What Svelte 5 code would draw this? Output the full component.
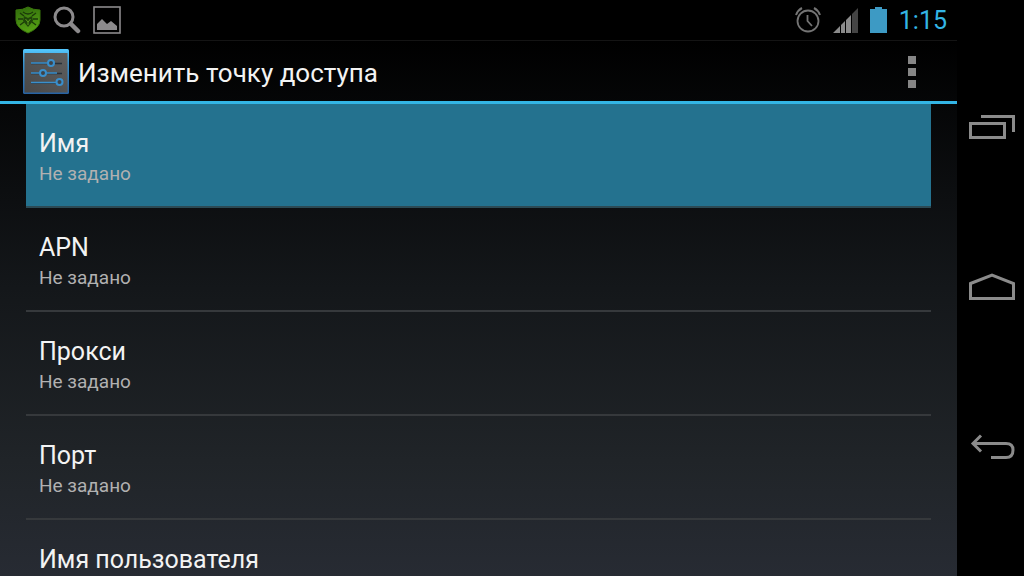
<script lang="ts">
	let selected = $state(0);

	const empty = 'Не задано';
	const items = [
		{ title: 'Имя', summary: empty },
		{ title: 'APN', summary: empty },
		{ title: 'Прокси', summary: empty },
		{ title: 'Порт', summary: empty },
		{ title: 'Имя пользователя', summary: empty }
	];
</script>

<div class="device">
	<div class="screen">
		<div class="status-bar">
			<div class="notifications">
				<svg width="26" height="28" viewBox="0 0 26 28">
					<defs>
						<linearGradient id="shield" x1="0" y1="0" x2="0.3" y2="1">
							<stop offset="0" stop-color="#2f6a0c" />
							<stop offset="1" stop-color="#559f14" />
						</linearGradient>
					</defs>
					<path
						d="M13 1 Q18 4 25 4 V14 Q25 22 13 27 Q1 22 1 14 V4 Q8 4 13 1Z"
						fill="url(#shield)"
						stroke="#3b780d"
						stroke-width="1"
					/>
					<g fill="none" stroke="#1b3a0a" stroke-width="1.3">
						<path d="M5 7 L9 10 M21 7 L17 10 M3 13 H8 M23 13 H18 M5 19 L9 16 M21 19 L17 16" />
						<path d="M8 6 Q13 10 18 6" />
					</g>
					<path d="M9 10 L13 12 L17 10 L18 15 L13 21 L8 15Z" fill="#1f450a" />
					<path d="M10.5 13 L13 16 L15.5 13 M13 16 V19" fill="none" stroke="#5c9c1c" />
				</svg>
				<svg width="28" height="28" viewBox="0 0 28 28" fill="none" stroke="#8c8a8c">
					<circle cx="11" cy="11" r="9" stroke-width="3" />
					<path d="M18 18 L25 25" stroke-width="4.5" stroke-linecap="round" />
				</svg>
				<svg width="28" height="28" viewBox="0 0 28 28">
					<rect x="1" y="1" width="26" height="26" fill="none" stroke="#8c8a8c" stroke-width="1.6" />
					<path d="M4 24 V18 L9 13 L14 18 L18 15 L24 20 V24Z" fill="#8c8a8c" />
				</svg>
			</div>
			<div class="system">
				<svg width="26" height="26" viewBox="0 0 26 26" fill="none" stroke="#747474" stroke-width="1.8">
					<circle cx="13" cy="14" r="10.5" />
					<path d="M12.5 8 V14 L17 19" />
					<path d="M1 8 Q3 3 7 1 M25 8 Q23 3 19 1" stroke-width="2" />
				</svg>
				<svg width="25" height="25" viewBox="0 0 25 25">
					<path d="M0 25 L7 18 V25Z M8 17 L12 13 V25 H8Z M13 12 L18 7 V25 H13Z" fill="#8a8a8a" />
					<path d="M19 6 L25 0 V25 H19Z" fill="#444" />
				</svg>
				<svg width="17" height="26" viewBox="0 0 17 26">
					<path d="M5 0 H12 V2 H17 V26 H0 V2 H5Z" fill="#3d9ac4" />
				</svg>
				<time>1:15</time>
			</div>
		</div>

		<header class="action-bar">
			<svg width="46" height="46" viewBox="0 0 46 46">
				<defs>
					<linearGradient id="edge" x1="0" y1="0" x2="0" y2="1">
						<stop offset="0" stop-color="#55c9ff" />
						<stop offset="0.3" stop-color="#3793cf" />
						<stop offset="1" stop-color="#2762a3" />
					</linearGradient>
					<linearGradient id="plate" x1="0" y1="1" x2="1" y2="0">
						<stop offset="0" stop-color="#484848" />
						<stop offset="1" stop-color="#5f5f5f" />
					</linearGradient>
				</defs>
				<rect width="46" height="45" rx="1.5" fill="url(#edge)" />
				<rect x="1.5" y="4" width="43" height="39.5" fill="url(#plate)" />
				<path d="M8 14.5 H39 M8 24.5 H39 M8 34 H39" stroke="#27303a" stroke-width="1.3" />
				<g stroke="#398fcc" stroke-width="1.5" fill="#3e4348">
					<path d="M8 14 H28 M8 24 H34 M8 33.5 H36" />
					<circle cx="28" cy="14" r="3" stroke-width="2" />
					<circle cx="20" cy="24" r="3" stroke-width="2" />
					<circle cx="36.5" cy="33" r="3" stroke-width="2" />
				</g>
			</svg>
			<h1>Изменить точку доступа</h1>
			<button class="overflow" aria-label="Меню">
				<i></i><i></i><i></i>
			</button>
		</header>

		<ul class="preferences">
			{#each items as item, i}
				<li>
					<button class="preference" class:selected={selected === i} onclick={() => (selected = i)}>
						<span class="title">{item.title}</span>
						<span class="summary">{item.summary}</span>
					</button>
				</li>
			{/each}
		</ul>
	</div>

	<nav class="nav-bar">
		<button aria-label="Недавние">
			<svg width="46" height="26" viewBox="0 0 46 26">
				<path d="M1.5 9.5 H35.5 V23.5 H1.5Z M12 2.5 H44.5 V18" />
			</svg>
		</button>
		<button aria-label="Домой">
			<svg width="46" height="28" viewBox="0 0 46 28">
				<path d="M1.5 10.5 L23 2 L44.5 10.5 V25.5 H1.5Z" />
			</svg>
		</button>
		<button aria-label="Назад">
			<svg width="46" height="26" viewBox="0 0 46 26">
				<path d="M4 9.5 H37 Q44 9.5 44 16 Q44 23.5 37 23.5 H22 M12 1.5 L4 9.5 L12 17.5" />
			</svg>
		</button>
	</nav>
</div>

<style>
	:global(body) {
		margin: 0;
		background: #000;
	}

	button {
		all: unset;
		box-sizing: border-box;
		cursor: pointer;
	}

	svg {
		display: block;
		flex: none;
	}

	.device {
		display: flex;
		height: 100vh;
		overflow: hidden;
		font-family: Roboto, 'Noto Sans', sans-serif;
		color: #f3f3f3;
	}

	.screen {
		flex: 1;
		min-width: 0;
		display: flex;
		flex-direction: column;
		background: linear-gradient(#000 7%, #050607 18%, #14171a 50%, #202428 80%, #272b33);
	}

	.status-bar {
		flex: none;
		display: flex;
		justify-content: space-between;
		height: 40px;
		padding: 0 10px 0 15px;
		background: #000;
	}

	.notifications,
	.system {
		display: flex;
		align-items: center;
		gap: 12px;
	}

	time {
		padding-top: 2px;
		font-size: 25px;
		line-height: 40px;
		color: #33b5e5;
	}

	.action-bar {
		flex: none;
		display: flex;
		align-items: center;
		gap: 9px;
		height: 64px;
		box-sizing: border-box;
		padding: 2px 33px 0 23px;
		border-top: 1px solid #141414;
		border-bottom: 3px solid #33b5e5;
	}

	h1 {
		flex: 1;
		margin: 0;
		padding-top: 2px;
		font-size: 26px;
		font-weight: 400;
		line-height: 32px;
	}

	.overflow {
		display: grid;
		gap: 4px;
		padding: 8px;
	}

	.overflow i {
		width: 8px;
		height: 8px;
		background: #868686;
	}

	.preferences {
		flex: 1;
		min-height: 0;
		overflow: hidden;
		margin: 0;
		padding: 0 26px;
		list-style: none;
	}

	.preference {
		display: flex;
		flex-direction: column;
		justify-content: center;
		width: 100%;
		height: 104px;
		padding: 5px 13px 0;
		border-bottom: 2px solid #36393c;
	}

	.preference.selected {
		background: #24728f;
		border-bottom-color: #2c4a54;
	}

	.title {
		font-size: 25px;
		line-height: 32px;
	}

	.summary {
		font-size: 19px;
		line-height: 27px;
		color: #b1b1b1;
	}

	.nav-bar {
		flex: none;
		display: flex;
		flex-direction: column;
		justify-content: space-between;
		align-items: center;
		width: 67px;
		box-sizing: border-box;
		padding: 114px 0 116px 2px;
		background: #000;
	}

	.nav-bar path {
		fill: none;
		stroke: #8b8b8b;
		stroke-width: 3;
	}
</style>
